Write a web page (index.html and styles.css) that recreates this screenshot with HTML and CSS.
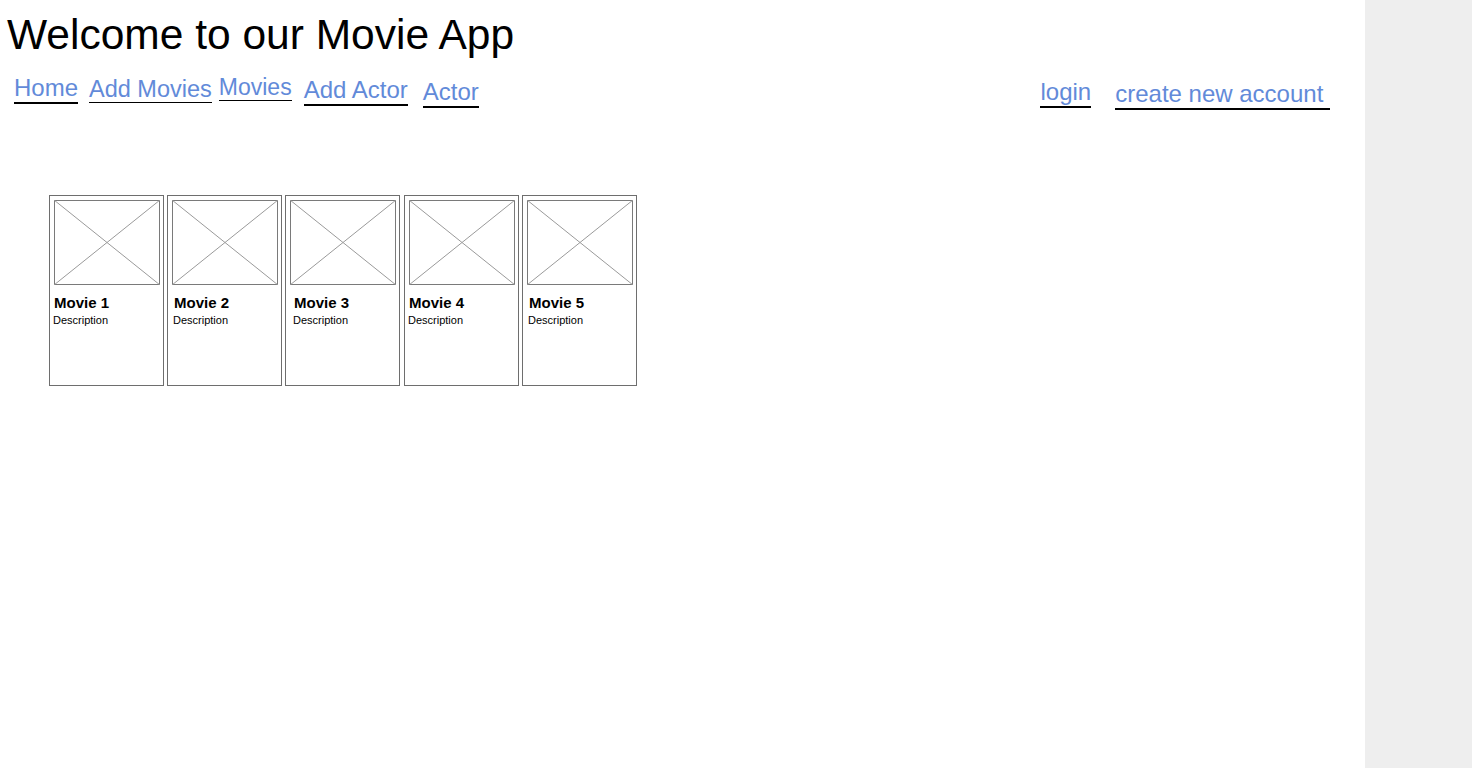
FILE: index.html
```html
<!DOCTYPE html>
<html lang="en">
<head>
<meta charset="utf-8">
<title>Movie App</title>
<link rel="stylesheet" href="styles.css">
</head>
<body>
<div class="page">
  <main class="main">
    <h1 class="title">Welcome to our Movie App</h1>
    <nav class="nav">
      <a class="link off-0" href="#">Home</a>
      <a class="link thin mid off-3 gap-11" href="#">Add Movies</a>
      <a class="link thin small off-1 gap-5" href="#">Movies</a>
      <a class="link off-2 gap-12" href="#">Add Actor</a>
      <a class="link off-4 gap-15" href="#">Actor</a>
      <a class="link off-4 push" href="#">login</a>
      <a class="link off-6 gap-24" href="#">create new account&nbsp;</a>
    </nav>
    <section class="cards">
      <div class="card">
        <svg class="thumb" viewBox="0 0 106 85" preserveAspectRatio="none"><rect x="0.5" y="0.5" width="105" height="84" fill="none" stroke="#7a7a7a"/><line x1="0" y1="0" x2="106" y2="85" stroke="#9a9a9a"/><line x1="106" y1="0" x2="0" y2="85" stroke="#9a9a9a"/></svg>
        <div class="card-title">Movie 1</div>
        <div class="card-desc">Description</div>
      </div>
      <div class="card shift-2">
        <svg class="thumb" viewBox="0 0 106 85" preserveAspectRatio="none"><rect x="0.5" y="0.5" width="105" height="84" fill="none" stroke="#7a7a7a"/><line x1="0" y1="0" x2="106" y2="85" stroke="#9a9a9a"/><line x1="106" y1="0" x2="0" y2="85" stroke="#9a9a9a"/></svg>
        <div class="card-title">Movie 2</div>
        <div class="card-desc">Description</div>
      </div>
      <div class="card shift-4">
        <svg class="thumb" viewBox="0 0 106 85" preserveAspectRatio="none"><rect x="0.5" y="0.5" width="105" height="84" fill="none" stroke="#7a7a7a"/><line x1="0" y1="0" x2="106" y2="85" stroke="#9a9a9a"/><line x1="106" y1="0" x2="0" y2="85" stroke="#9a9a9a"/></svg>
        <div class="card-title">Movie 3</div>
        <div class="card-desc">Description</div>
      </div>
      <div class="card wide-gap">
        <svg class="thumb" viewBox="0 0 106 85" preserveAspectRatio="none"><rect x="0.5" y="0.5" width="105" height="84" fill="none" stroke="#7a7a7a"/><line x1="0" y1="0" x2="106" y2="85" stroke="#9a9a9a"/><line x1="106" y1="0" x2="0" y2="85" stroke="#9a9a9a"/></svg>
        <div class="card-title">Movie 4</div>
        <div class="card-desc">Description</div>
      </div>
      <div class="card shift-2">
        <svg class="thumb" viewBox="0 0 106 85" preserveAspectRatio="none"><rect x="0.5" y="0.5" width="105" height="84" fill="none" stroke="#7a7a7a"/><line x1="0" y1="0" x2="106" y2="85" stroke="#9a9a9a"/><line x1="106" y1="0" x2="0" y2="85" stroke="#9a9a9a"/></svg>
        <div class="card-title">Movie 5</div>
        <div class="card-desc">Description</div>
      </div>
    </section>
  </main>
  <aside class="side"></aside>
</div>
</body>
</html>
```

FILE: styles.css
```css
html, body {
  margin: 0;
  padding: 0;
  height: 100%;
}

body {
  font-family: "Liberation Sans", Arial, sans-serif;
  background: #ffffff;
  color: #000000;
}

.page {
  display: flex;
  min-height: 768px;
}

.main {
  flex: 1;
  min-width: 0;
  background: #ffffff;
}

.side {
  width: 107px;
  flex: 0 0 107px;
  background: #eeeeee;
}

.title {
  margin: 0 0 0 7px;
  padding-top: 12px;
  font-size: 42.5px;
  font-weight: normal;
  line-height: 46px;
  white-space: nowrap;
}

.nav {
  display: flex;
  align-items: flex-start;
  margin-top: 16px;
  padding: 0 35px 0 14px;
}

.link {
  display: block;
  font-size: 24px;
  line-height: 28px;
  color: #628ad9;
  text-decoration: none;
  border-bottom: 2px solid #000000;
  white-space: nowrap;
}

.link.thin {
  line-height: 25px;
  border-bottom-width: 1px;
}

.link.mid {
  font-size: 23.5px;
}

.link.small {
  font-size: 23px;
}

.off-0 { margin-top: 0; }
.off-1 { margin-top: 1px; }
.off-2 { margin-top: 2px; }
.off-3 { margin-top: 3px; }
.off-4 { margin-top: 4px; }
.off-6 { margin-top: 6px; }

.gap-5 { margin-left: 7px; }
.gap-11 { margin-left: 11px; }
.gap-12 { margin-left: 12px; }
.gap-15 { margin-left: 15px; }
.gap-24 { margin-left: 24px; }
.push { margin-left: auto; }

.cards {
  display: flex;
  gap: 3px;
  margin: 85px 0 0 49px;
}

.card {
  box-sizing: border-box;
  width: 115px;
  height: 191px;
  border: 1px solid #6e6e6e;
  padding: 4px 3px 0 4px;
}

.card.wide-gap {
  margin-left: 1px;
}

.thumb {
  display: block;
  width: 106px;
  height: 85px;
}

.card-title {
  margin: 9px 0 0 0;
  font-size: 15px;
  font-weight: bold;
  line-height: 17px;
  white-space: nowrap;
}

.card-desc {
  margin: 3px 0 0 -1px;
  font-size: 11px;
  line-height: 13px;
  white-space: nowrap;
}

.card.shift-2 .card-title { padding-left: 2px; }
.card.shift-2 .card-desc { padding-left: 2px; }
.card.shift-4 .card-title { padding-left: 4px; }
.card.shift-4 .card-desc { padding-left: 4px; }
```
